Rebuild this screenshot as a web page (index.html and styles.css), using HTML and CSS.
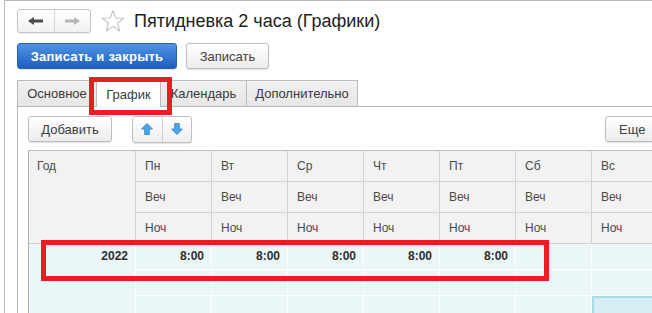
FILE: index.html
```html
<!DOCTYPE html>
<html lang="ru">
<head>
  <meta charset="UTF-8">
  <title>Пятидневка 2 часа (Графики)</title>
  <link rel="stylesheet" href="styles.css">
</head>
<body>
  <div class="window">
    <div class="titlebar">
      <div class="nav">
        <button class="nav-btn">
          <svg width="15" height="8" viewBox="0 0 15 8"><polygon points="0,4 6,0 6,2.5 15,2.5 15,5.5 6,5.5 6,8" fill="#4a4a4a"/></svg>
        </button>
        <button class="nav-btn">
          <svg width="15" height="8" viewBox="0 0 15 8"><polygon points="15,4 9,0 9,2.5 0,2.5 0,5.5 9,5.5 9,8" fill="#b5b5b5"/></svg>
        </button>
      </div>
      <svg class="star" width="24" height="24" viewBox="0 0 24 24">
        <polygon points="12,1.5 14.8,9 22.8,9.2 16.5,14.2 18.7,22 12,17.4 5.3,22 7.5,14.2 1.2,9.2 9.2,9" fill="#fff" stroke="#c4c4c4" stroke-width="1.1" stroke-linejoin="round"/>
      </svg>
      <h1 class="title">Пятидневка 2 часа (Графики)</h1>
    </div>

    <div class="actions">
      <button class="btn btn-primary">Записать и закрыть</button>
      <button class="btn btn-save">Записать</button>
    </div>

    <div class="tabs">
      <div class="tab tab-main">Основное</div>
      <div class="tab tab-active">График</div>
      <div class="tab tab-cal">Календарь</div>
      <div class="tab tab-extra">Дополнительно</div>
    </div>

    <div class="panel">
      <div class="toolbar">
        <button class="btn btn-add">Добавить</button>
        <div class="move-group">
          <button class="move-btn">
            <svg width="12" height="12" viewBox="0 0 12 12"><polygon points="6,0.5 11.5,6 8.3,6 8.3,11.5 3.7,11.5 3.7,6 0.5,6" fill="#4aa4e6" stroke="#2f86c9" stroke-width="0.8"/></svg>
          </button>
          <button class="move-btn">
            <svg width="12" height="12" viewBox="0 0 12 12"><polygon points="6,11.5 11.5,6 8.3,6 8.3,0.5 3.7,0.5 3.7,6 0.5,6" fill="#4aa4e6" stroke="#2f86c9" stroke-width="0.8"/></svg>
          </button>
        </div>
        <button class="btn btn-more">Еще</button>
      </div>

      <div class="grid">
        <div class="head head-year">Год</div>
        <div class="head">Пн</div>
        <div class="head">Вт</div>
        <div class="head">Ср</div>
        <div class="head">Чт</div>
        <div class="head">Пт</div>
        <div class="head">Сб</div>
        <div class="head">Вс</div>

        <div class="head">Веч</div>
        <div class="head">Веч</div>
        <div class="head">Веч</div>
        <div class="head">Веч</div>
        <div class="head">Веч</div>
        <div class="head">Веч</div>
        <div class="head">Веч</div>

        <div class="head">Ноч</div>
        <div class="head">Ноч</div>
        <div class="head">Ноч</div>
        <div class="head">Ноч</div>
        <div class="head">Ноч</div>
        <div class="head">Ноч</div>
        <div class="head">Ноч</div>

        <div class="cell cell-year">2022</div>
        <div class="cell">8:00</div>
        <div class="cell">8:00</div>
        <div class="cell">8:00</div>
        <div class="cell">8:00</div>
        <div class="cell">8:00</div>
        <div class="cell"></div>
        <div class="cell"></div>

        <div class="cell"></div>
        <div class="cell"></div>
        <div class="cell"></div>
        <div class="cell"></div>
        <div class="cell"></div>
        <div class="cell"></div>
        <div class="cell"></div>

        <div class="cell"></div>
        <div class="cell"></div>
        <div class="cell"></div>
        <div class="cell"></div>
        <div class="cell"></div>
        <div class="cell"></div>
        <div class="cell cell-current"></div>
      </div>
    </div>
  </div>

  <div class="mark mark-tab"></div>
  <div class="mark mark-row"></div>
</body>
</html>
```

FILE: styles.css
```css
body {
  margin: 0;
  background: #fff;
  font-family: 'Liberation Sans', Arial, sans-serif;
  color: #333;
  overflow: hidden;
  height: 313px;
  position: relative;
}

.window {
  margin-left: 4px;
  width: 680px;
  height: 313px;
  border-left: 1px solid #b9b9b9;
  border-top: 1px solid #b9b9b9;
  padding: 8px 0 0 12px;
  box-sizing: border-box;
  overflow: hidden;
}

/* title line */

.titlebar {
  display: flex;
  align-items: center;
  height: 24px;
}

.nav {
  display: flex;
  width: 74px;
  height: 24px;
  border: 1px solid #c4c4c4;
  border-radius: 3px;
  box-sizing: border-box;
  background: linear-gradient(#fff, #f1f1f1);
  box-shadow: 0 1px 1px rgba(0, 0, 0, 0.08);
}

.nav-btn {
  flex: 1;
  border: none;
  background: none;
  padding: 0;
  display: flex;
  align-items: center;
  justify-content: center;
}

.nav-btn + .nav-btn {
  border-left: 1px solid #d2d2d2;
}

.star {
  margin-left: 10px;
}

.title {
  margin: 0 0 0 9px;
  font-size: 18px;
  font-weight: normal;
  color: #1e1e1e;
  white-space: nowrap;
}

/* buttons */

.actions {
  display: flex;
  gap: 9px;
  margin-top: 10px;
}

.btn {
  height: 26px;
  padding: 0;
  border: 1px solid #bdbdbd;
  border-radius: 3px;
  background: linear-gradient(#ffffff, #ececec);
  box-shadow: 0 1px 1px rgba(0, 0, 0, 0.12);
  font-family: inherit;
  font-size: 13px;
  color: #404040;
}

.btn-primary {
  width: 160px;
  border-color: #2b62b0;
  background: linear-gradient(#4f95e2, #1c5ec2);
  color: #fff;
  font-weight: bold;
  letter-spacing: 0.2px;
}

.btn-save {
  width: 83px;
}

/* tabs */

.tabs {
  display: flex;
  margin-top: 11px;
  height: 26px;
  border-bottom: 1px solid #b8b8b8;
}

.tab {
  height: 26px;
  box-sizing: border-box;
  border: 1px solid #bcbcbc;
  border-left: none;
  border-bottom: none;
  background: linear-gradient(#f1f1f1, #e6e6e6);
  font-size: 13px;
  color: #3a3a3a;
  line-height: 26px;
  text-align: center;
}

.tab-main {
  width: 80px;
  border-left: 1px solid #bcbcbc;
}

.tab-active {
  width: 64px;
  height: 27px;
  background: #fff;
  line-height: 28px;
}

.tab-cal {
  width: 86px;
}

.tab-extra {
  width: 111px;
}

/* tab page */

.panel {
  border-left: 1px solid #b8b8b8;
  padding: 9px 10px 0 10px;
  height: 240px;
  overflow: hidden;
}

.toolbar {
  display: flex;
  align-items: center;
  height: 26px;
}

.btn-add {
  width: 84px;
}

.move-group {
  display: flex;
  margin-left: 20px;
  width: 60px;
  height: 27px;
  border: 1px solid #c0c0c0;
  border-radius: 3px;
  box-sizing: border-box;
  background: linear-gradient(#fff, #eeeeee);
  box-shadow: 0 1px 1px rgba(0, 0, 0, 0.12);
}

.move-btn {
  flex: 1;
  border: none;
  background: none;
  padding: 0;
  display: flex;
  align-items: center;
  justify-content: center;
}

.move-btn + .move-btn {
  border-left: 1px solid #d0d0d0;
}

.btn-more {
  margin-left: auto;
  width: 69px;
  text-align: left;
  padding-left: 13px;
}

/* table */

.grid {
  display: grid;
  grid-template-columns: 107px repeat(7, 76px);
  grid-template-rows: 31px 31px 31px 26px 26px 26px;
  width: max-content;
  margin-top: 8px;
  border-left: 1px solid #aeaeae;
  border-top: 1px solid #bdbdbd;
  font-size: 12px;
}

.head {
  background: #f2f2f2;
  border-right: 1px solid #d2d2d2;
  border-bottom: 1px solid #d2d2d2;
  padding-left: 9px;
  line-height: 30px;
  color: #4a4a4a;
}

.head-year {
  grid-row: span 3;
  padding-left: 8px;
}

.cell {
  background: #eaf6f8;
  border-right: 1px solid #fff;
  border-bottom: 1px solid #fff;
  padding-right: 7px;
  text-align: right;
  line-height: 25px;
  font-weight: bold;
  color: #2e2e2e;
}

.cell-year {
  grid-row: span 3;
  border-bottom: none;
}

.cell-current {
  background: #d5eef3;
  box-shadow: inset 0 0 0 2px #a8dae3;
}

/* red highlight frames */

.mark {
  position: absolute;
  border: 5px solid #ec1c24;
  box-sizing: border-box;
}

.mark-tab {
  left: 89px;
  top: 77px;
  width: 83px;
  height: 38px;
}

.mark-row {
  left: 41px;
  top: 240px;
  width: 508px;
  height: 41px;
}
```
